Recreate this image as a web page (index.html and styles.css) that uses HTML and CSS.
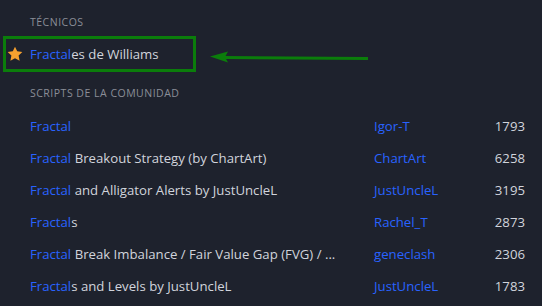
FILE: index.html
```html
<!DOCTYPE html>
<html lang="es">
<head>
<meta charset="utf-8">
<link rel="stylesheet" href="styles.css">
</head>
<body>
<div class="panel">
  <div class="section-title first">TÉCNICOS</div>
  <div class="tech-row">
    <svg class="star" viewBox="0 0 24 24" width="16" height="16"><path d="M12 1l3.3 7 7.7 1-5.6 5.3 1.5 7.7L12 18.2l-6.9 3.8 1.5-7.7L1 9l7.7-1z" fill="#f7a12f"/></svg>
    <span class="title"><span class="hl">Fractal</span>es de Williams</span>
  </div>
  <div class="section-title second">SCRIPTS DE LA COMUNIDAD</div>
  <div class="row"><span class="title"><span class="hl">Fractal</span></span><span class="author">Igor-T</span><span class="count">1793</span></div>
  <div class="row"><span class="title"><span class="hl">Fractal</span> Breakout Strategy (by ChartArt)</span><span class="author">ChartArt</span><span class="count">6258</span></div>
  <div class="row"><span class="title"><span class="hl">Fractal</span> and Alligator Alerts by JustUncleL</span><span class="author">JustUncleL</span><span class="count">3195</span></div>
  <div class="row"><span class="title"><span class="hl">Fractal</span>s</span><span class="author">Rachel_T</span><span class="count">2873</span></div>
  <div class="row"><span class="title"><span class="hl">Fractal</span> Break Imbalance / Fair Value Gap (FVG) / ...</span><span class="author">geneclash</span><span class="count">2306</span></div>
  <div class="row"><span class="title"><span class="hl">Fractal</span>s and Levels by JustUncleL</span><span class="author">JustUncleL</span><span class="count">1783</span></div>

  <div class="annot-box"></div>
  <svg class="annot-arrow" width="160" height="16" viewBox="0 0 160 16">
    <path d="M14 7.5 L158 8.5" stroke="#0b7d0b" stroke-width="3" fill="none"/>
    <path d="M0 6.5 L18 1.5 L15 7 L18 12.5 Z" fill="#0b7d0b"/>
  </svg>
</div>
</body>
</html>
```
FILE: styles.css
```css
html, body {
  margin: 0;
  padding: 0;
  background: #1e222d;
}
body {
  width: 542px;
  height: 306px;
  overflow: hidden;
  font-family: "Open Sans", "DejaVu Sans", sans-serif;
}
.panel {
  position: relative;
  width: 542px;
  height: 306px;
}
.section-title {
  padding-left: 30px;
  font-size: 10.5px;
  line-height: 12px;
  height: 12px;
  letter-spacing: 0.5px;
  color: #8b8e98;
}
.section-title.first {
  padding-top: 16px;
  padding-bottom: 10px;
}
.section-title.second {
  padding-top: 17px;
  padding-bottom: 11px;
}
.tech-row {
  height: 32px;
  display: flex;
  align-items: center;
  padding-left: 7px;
  gap: 7px;
  font-size: 13.2px;
  color: #d1d4dc;
}
.star {
  flex: none;
}
.row {
  height: 32px;
  display: flex;
  align-items: center;
  padding-left: 30px;
  padding-right: 17px;
  font-size: 13.2px;
  color: #d1d4dc;
}
.title {
  white-space: nowrap;
}
.row .title {
  width: 344px;
  flex: none;
  overflow: hidden;
}
.hl {
  color: #2962ff;
}
.author {
  color: #2962ff;
  flex: 1;
}
.count {
  text-align: right;
}
.annot-box {
  position: absolute;
  left: 3px;
  top: 36px;
  width: 187px;
  height: 30px;
  border: 3px solid #0b7d0b;
}
.annot-arrow {
  position: absolute;
  left: 210px;
  top: 50px;
}
```
